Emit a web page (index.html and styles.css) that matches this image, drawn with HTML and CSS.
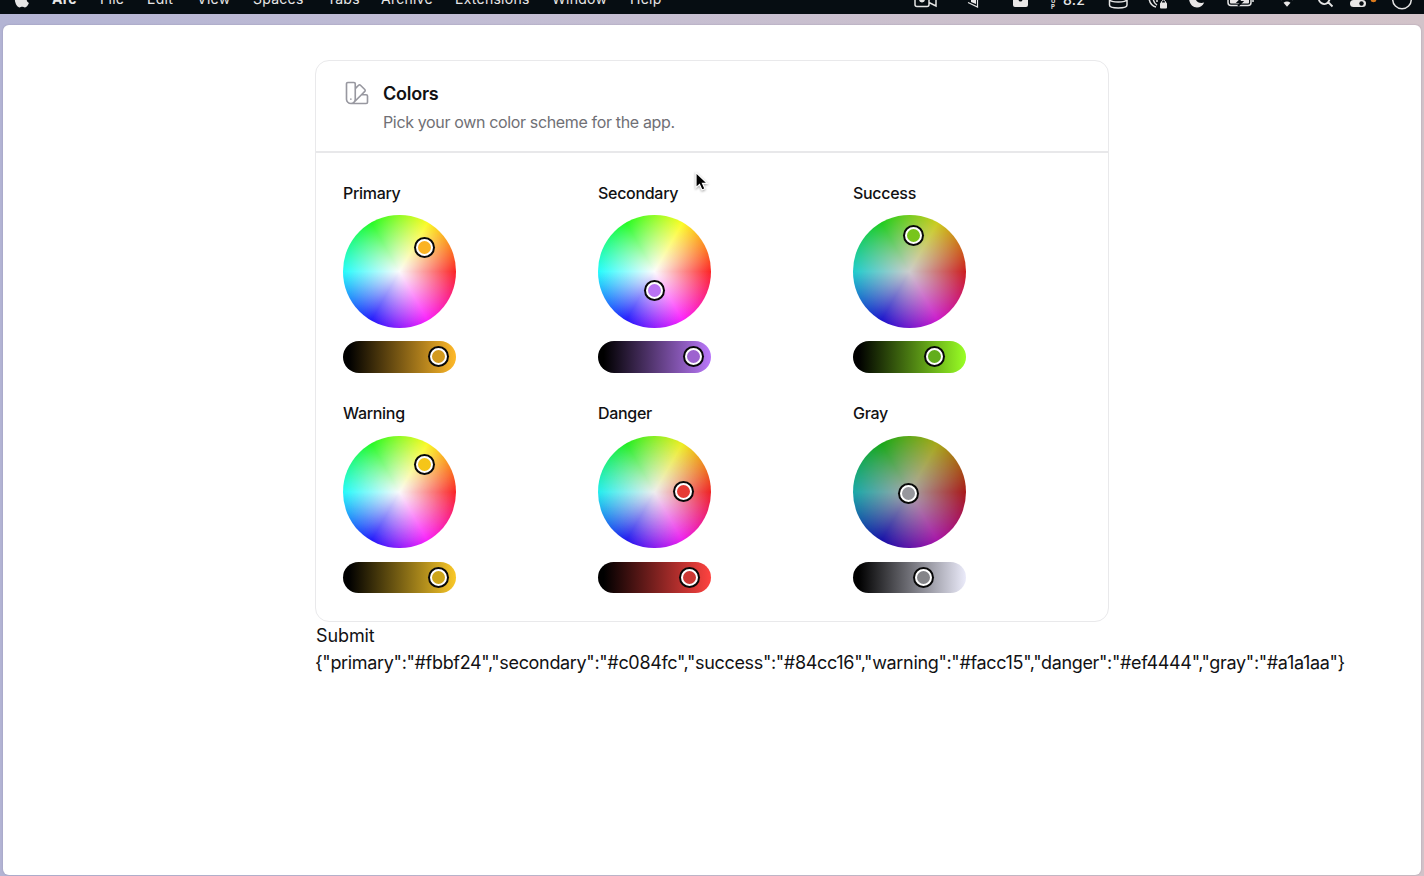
FILE: index.html
```html
<!DOCTYPE html>
<html lang="en">
<head>
<meta charset="utf-8">
<title>Colors</title>
<link rel="stylesheet" href="styles.css">
</head>
<body>
<header class="menubar">
  <nav class="menus">
    <svg class="apple" viewBox="0 0 16 20" width="16" height="20"><path d="M11 5C9.500 5 9 5.800 8 5.800S6 5 4.700 5C2.500 5 .800 7 .800 10c0 4.500 2.700 8.400 4.700 8.400 1 0 1.500-.600 2.700-.600s1.600.600 2.700.600c1.700 0 3.300-2.600 4-4.500-3-1.400-3-5.400-.200-7C13.900 5.600 12.400 5 11 5zM8 4.500C8 2.500 9.500 1 11.300.800 11.400 3 9.800 4.500 8 4.500z"/></svg>
    <b>Arc</b><span>File</span><span>Edit</span><span>View</span><span>Spaces</span><span>Tabs</span><span>Archive</span><span>Extensions</span><span>Window</span><span>Help</span>
  </nav>
  <svg class="tray" viewBox="904 0 520 14" width="520" height="14">
    <g fill="none" stroke="#e4e4e4" stroke-width="1.500">
      <path d="M915-3v7.500q0 2 2 2h10q2 0 2-2v-2l7 3.500V-3M929-1v3"/>
      <circle cx="922" cy="-.5" r="2.200" fill="#e4e4e4"/>
      <path d="M968 2.500l9.500 4.500V-2" stroke-width="1.200"/>
      <path d="M1109.500-3v8c0 4 17.500 4 17.500 0v-8M1109.500-1c0 4 17.500 4 17.500 0"/>
      <path d="M1149-2c.5 5 3 8 7 9M1153-2c.5 4 2 6 4 7M1157-2v4"/>
      <path d="M1228-3v5.500q0 3 3 3h17q3 0 3-3V-3M1253-1v3"/>
      <path d="M1319-3a5.500 5.500 0 0 0 9 5.500M1327.500 1.500l5 5M1330-3q0 3-2 5" stroke-width="1.800"/>
      <circle cx="1402" cy="-.5" r="9.300"/>
    </g>
    <g fill="#e9e7e7">
      <path d="M971-2h5v6l-5-2zM1013-3h15v8q0 2-2 2h-11q-2 0-2-2z"/>
      <path d="M1189-2h6.500c0 3.500 4 6 8.700 4.500-1.500 3.200-4.200 5-7.200 5-4.500 0-8-4-8-9.500z"/>
      <path d="M1230-3h19v5.500q0 1-1 1h-17q-1 0-1-1z"/>
      <path d="M1283.500 2.700q3.500-2.500 7 0l-3.500 4z"/>
      <rect x="1350" y="0" width="16" height="7" rx="3.500"/>
      <rect x="1160" y="2.500" width="7" height="6" rx="1"/>
    </g>
    <path d="M1280.500-.5q6.500-4.500 13 0" fill="none" stroke="#e9e7e7" stroke-width="2"/>
    <path d="M1161.500 3V1.500q2-3 4 0V3" fill="none" stroke="#e9e7e7"/>
    <path d="M1243-3l-5 5h4l-4 4" fill="none" stroke="#060d12" stroke-width="1.800"/>
    <circle cx="1020.500" cy="-.5" r="2" fill="#060d12"/>
    <circle cx="1361.500" cy="3.500" r="2.200" fill="#060d12"/>
    <circle cx="1373.500" cy="-.8" r="3" fill="#dc7a1c"/>
    <text class="tray-small" x="1051" y="9">P</text>
    <text class="tray-small" x="1051" y="3">U</text>
    <text class="tray-num" x="1063" y="5" textLength="22">8.2</text>
  </svg>
</header>
<main class="window">
  <section class="card">
    <div class="card-head">
      <svg class="swatch" viewBox="0 0 24 24" width="28" height="28" fill="none" stroke="#9898a0" stroke-width="1.400" stroke-linecap="round" stroke-linejoin="round"><path d="M4.098 19.902a3.750 3.750 0 0 0 5.304 0l6.401-6.402M6.750 21A3.750 3.750 0 0 1 3 17.250V4.125C3 3.504 3.504 3 4.125 3h5.250c.621 0 1.125.504 1.125 1.125v4.072M6.750 21a3.750 3.750 0 0 0 3.750-3.750V8.197M6.750 21h13.125c.621 0 1.125-.504 1.125-1.125v-5.250c0-.621-.504-1.125-1.125-1.125h-4.072M10.500 8.197l2.880-2.880c.438-.439 1.150-.439 1.590 0l3.712 3.713c.440.440.440 1.152 0 1.590l-2.879 2.880M6.750 17.250h.008v.008H6.750v-.008Z"/></svg>
      <div>
        <h1>Colors</h1>
        <p>Pick your own color scheme for the app.</p>
      </div>
    </div>
    <div class="pickers" id="pickers"></div>
  </section>
  <div class="submit">Submit</div>
  <div class="json">{"primary":"#fbbf24","secondary":"#c084fc","success":"#84cc16","warning":"#facc15","danger":"#ef4444","gray":"#a1a1aa"}</div>
</main>
<svg class="cursor" viewBox="0 0 16 22" width="16" height="22"><path d="M2 1.500v15.200l3.500-3.300 2.500 5.600 3-1.300-2.500-5.400h4.800z" fill="#000" stroke="#fff" stroke-width="1.200"/></svg>
<script src="pickers.js"></script>
</body>
</html>
```
FILE: pickers.js
```js
// x, y: wheel handle centre; s: slider handle centre; shade: darkness of the wheel
const pickers = [
  { name: 'Primary', x: 81.5, y: 32.5, s: 95.5, shade: 0.015, dot: '#fbb324', knob: '#d39a20', full: '#ffb929' },
  { name: 'Secondary', x: 56, y: 75.5, s: 95.5, shade: 0.01, dot: '#b973f3', knob: '#9d63cf', full: '#ba78fa' },
  { name: 'Success', x: 60.5, y: 20.5, s: 81, shade: 0.2, dot: '#78c51b', knob: '#62ad1c', full: '#9aff25' },
  { name: 'Warning', x: 81, y: 28.5, s: 95.5, shade: 0.02, dot: '#f5c518', knob: '#cda51a', full: '#fac828' },
  { name: 'Danger', x: 85, y: 56, s: 91.5, shade: 0.065, dot: '#e63a34', knob: '#cb3733', full: '#ff4340' },
  { name: 'Gray', x: 55, y: 58, s: 70, shade: 0.34, dot: '#97979d', knob: '#858589', full: '#ebebfa' }
];

document.getElementById('pickers').innerHTML = pickers.map(p => `
  <div class="picker">
    <div class="label">${p.name}</div>
    <div class="wheel" style="--shade:${p.shade}">
      <i class="handle" style="left:${p.x}px;top:${p.y}px;background:${p.dot}"></i>
    </div>
    <div class="slider" style="background:linear-gradient(90deg,#000 5%,${p.full})">
      <i class="handle" style="left:${p.s}px;top:15.5px;background:${p.knob}"></i>
    </div>
  </div>`).join('');
```
FILE: styles.css
```css
* { box-sizing: border-box; }
body {
  margin: 0;
  height: 876px;
  overflow: hidden;
  display: flex;
  flex-direction: column;
  font-family: Inter, "Liberation Sans", sans-serif;
  color: #111113;
  background: linear-gradient(90deg, #b3b4d4, #c2bdd4 35%, #cbc0cd 65%, #d2c3c9);
}
.menubar {
  height: 14px;
  flex: none;
  overflow: hidden;
  display: flex;
  justify-content: space-between;
  background: #060d12;
  color: #e6e6e6;
  font-size: 14px;
}
.menus {
  display: grid;
  grid-template-columns: 38px 48px 47px 50px 56px 74px 54px 74px 97px 78px 40px;
  padding-left: 14px;
  margin-top: -10px;
  line-height: 17px;
  letter-spacing: .25px;
  white-space: nowrap;
}
.apple { fill: #e6e6e6; margin-top: -1px; }
.tray { flex: none; }
.tray-small { font: 700 6px Inter, sans-serif; fill: #e6e6e6; }
.tray-num { font: 500 14px Inter, sans-serif; fill: #e6e6e6; }
.window {
  margin: 11px 3px 1px;
  flex: 1;
  padding: 35px 0 0 312px;
  background: #fff;
  border-radius: 6px;
  box-shadow: 0 0 1px 1px rgba(120, 115, 145, .14);
}
.card {
  width: 794px;
  height: 562px;
  border: 1px solid #e9e9eb;
  border-radius: 14px;
}
.card-head {
  height: 92px;
  display: flex;
  gap: 12px;
  padding: 18px 0 0 27px;
  border-bottom: 2px solid #e8e8ea;
}
.swatch { flex: none; }
h1 { margin: 2px 0 0; font-size: 18px; line-height: 26px; font-weight: 600; letter-spacing: -.25px; }
p { margin: 2px 0 0; font-size: 16px; line-height: 26px; color: #707075; letter-spacing: -.35px; }
.pickers {
  display: grid;
  grid-template-columns: repeat(3, 255px);
  grid-auto-rows: 220.500px;
  padding: 25.500px 0 0 27px;
}
.label { height: 36.500px; line-height: 28px; font-size: 16px; font-weight: 500; letter-spacing: -.3px; }
.wheel, .slider { position: relative; width: 112.500px; }
.wheel {
  height: 112.500px;
  border-radius: 50%;
  background:
    linear-gradient(rgba(0, 0, 0, var(--shade)), rgba(0, 0, 0, var(--shade))),
    radial-gradient(closest-side, #fff, rgba(255, 255, 255, .07)),
    conic-gradient(from 90deg, #ff1414, #ff10ff, #1008ff, #14ffff, #14ff14, #ffff14, #ff1414);
}
.slider { height: 31.500px; margin-top: 13.500px; border-radius: 16px; }
.handle {
  position: absolute;
  width: 17px;
  height: 17px;
  margin: -8.500px;
  border: 2.500px solid #fff;
  border-radius: 50%;
  box-shadow: 0 0 0 2px #080808;
}
.submit, .json { padding-left: 1px; font-size: 18px; line-height: 27px; white-space: nowrap; }
.submit { letter-spacing: -.1px; }
.json { letter-spacing: -.33px; padding-left: 0; }
.cursor { position: absolute; left: 694px; top: 171px; filter: drop-shadow(0 1px 1px rgba(0, 0, 0, .35)); }
```
